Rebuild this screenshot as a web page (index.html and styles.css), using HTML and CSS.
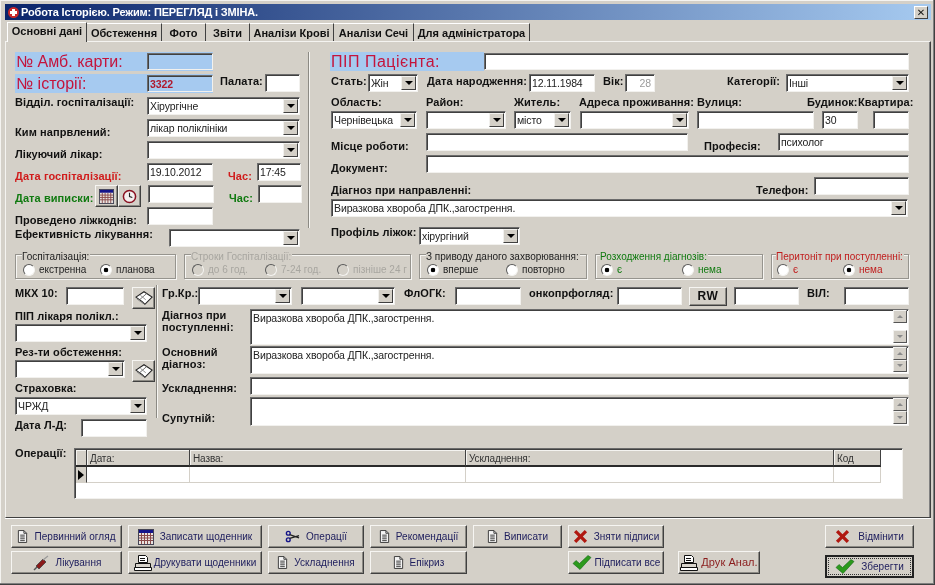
FILE: index.html
```html
<!DOCTYPE html>
<html lang="uk">
<head>
<meta charset="utf-8">
<title>Робота Історією</title>
<link rel="stylesheet" href="styles.css">
</head>
<body>
<svg class="defs" width="0" height="0" aria-hidden="true">
  <symbol id="i-doc" viewBox="0 0 12 14"><path d="M1.500.5h6l3 3v10h-9z" fill="#f4f4f4" stroke="#333"/><path d="M7.500.5v3h3M3.500 5.500h5M3.500 7.500h5M3.500 9.500h5M3.500 11.500h5" fill="none" stroke="#333"/></symbol>
  <symbol id="i-cal" viewBox="0 0 16 16"><rect x=".5" y=".5" width="15" height="15" fill="#e8e4e0" stroke="#445"/><rect x="1" y="1" width="14" height="3" fill="#14148a"/><path d="M1 6.500h14M1 9h14M1 11.500h14M3.500 4v11M6.500 4v11M9.500 4v11M12.500 4v11" stroke="#8a4a4a"/></symbol>
  <symbol id="i-clock" viewBox="0 0 16 16"><circle cx="8" cy="8" r="6.500" fill="#f4eeee" stroke="#8a1020" stroke-width="1.600"/><path d="M8 4v4l3 1" fill="none" stroke="#222" stroke-width="1.200"/></symbol>
  <symbol id="i-book" viewBox="0 0 20 16"><path d="M1 7 10 1l3 2 6 4-8 8-3-3z" fill="#fff" stroke="#222" stroke-width="1.200"/><path d="M13 3 5 10" fill="none" stroke="#666"/><path d="M2 9l7 5M6 5l6 5" fill="none" stroke="#888"/></symbol>
  <symbol id="i-sci" viewBox="0 0 16 14"><circle cx="3.500" cy="3.500" r="2" fill="none" stroke="#14148a" stroke-width="1.500"/><circle cx="3.500" cy="10.500" r="2" fill="none" stroke="#14148a" stroke-width="1.500"/><path d="M5 5l10 3.500M5 9l10-3" stroke="#222" stroke-width="1.300"/></symbol>
  <symbol id="i-syr" viewBox="0 0 18 16"><path d="M2 15l3-3" stroke="#555" stroke-width="1.500"/><path d="M4 11l7-7 3 3-7 7z" fill="#8a1a1a" stroke="#444" stroke-width=".8"/><path d="M11 5l5-4" stroke="#999" stroke-width="1.200"/></symbol>
  <symbol id="i-prn" viewBox="0 0 18 16"><path d="M4.500.5h7l2 2v5h-9z" fill="#fff" stroke="#111"/><path d="M6 3.500h5M6 5.500h5" stroke="#111"/><path d="M1.500 8.500h15v4h-15z" fill="#d8d4cc" stroke="#111"/><path d="M.5 12.500h17v3H.5z" fill="#fff" stroke="#111"/></symbol>
  <symbol id="i-x" viewBox="0 0 16 16"><path d="M1 3.500 3.500 1 8 5.500 12.500 1 15 3.500 10.500 8 15 12.500 12.500 15 8 10.500 3.500 15 1 12.500 5.500 8z" fill="#b01810"/></symbol>
  <symbol id="i-ok" viewBox="0 0 20 16"><path d="M1 9l3-3 3.500 3L16 1l3 2L8 15z" fill="#2c9a1c" stroke="#14641a" stroke-width=".6"/></symbol>
</svg>

<div class="win">
  <header class="title">
    <span class="app-ico"></span>
    <span class="title-text">Робота Історією. Режим: ПЕРЕГЛЯД і ЗМІНА.</span>
    <span class="close">✕</span>
  </header>

  <nav class="tabs">
    <span class="tab active">Основні дані</span>
    <span class="tab w75">Обстеження</span>
    <span class="tab w44">Фото</span>
    <span class="tab w44">Звіти</span>
    <span class="tab w84">Аналізи Крові</span>
    <span class="tab w80">Аналізи Сечі</span>
    <span class="tab w116">Для адміністратора</span>
  </nav>

  <main class="panel">
    <section class="top">
      <div class="col-l">
        <div class="row">
          <div class="blue w198"><span class="big w132">№ Амб. карти:</span><span class="fld w66 h17"></span></div>
        </div>
        <div class="row h23">
          <div class="blue w198"><span class="big w132">№ історії:</span><span class="fld w66 h17 val-red">3322</span></div>
          <span class="lbl ml7 w45 t1">Палата:</span><span class="fld w35"></span>
        </div>
        <div class="row"><span class="lbl w132 up">Відділ. госпіталізації:</span><div class="fld sel w153">Хірургічне<i class="arr"></i></div></div>
        <div class="row"><span class="lbl w132 dn">Ким напрвлений:</span><div class="fld sel w153">лікар поліклініки<i class="arr"></i></div></div>
        <div class="row"><span class="lbl w132 dn">Лікуючий лікар:</span><div class="fld sel w153"><i class="arr"></i></div></div>
        <div class="row">
          <span class="lbl w132 dn c-red">Дата госпіталізації:</span><span class="fld w66 c-dred">19.10.2012</span>
          <span class="lbl ml15 w29 dn c-red">Час:</span><span class="fld w44 c-dred">17:45</span>
        </div>
        <div class="row">
          <span class="lbl w80 dn c-green">Дата виписки:</span>
          <span class="btn ib"><svg class="ic15"><use href="#i-cal"/></svg></span>
          <span class="btn ib"><svg class="ic15"><use href="#i-clock"/></svg></span>
          <span class="fld ml7 w66"></span>
          <span class="lbl ml15 w29 dn c-green">Час:</span><span class="fld w44"></span>
        </div>
        <div class="row"><span class="lbl w132 dn">Проведено ліжкоднів:</span><span class="fld w66"></span></div>
        <div class="row"><span class="lbl w154 up">Ефективність лікування:</span><div class="fld sel w131"><i class="arr"></i></div></div>
      </div>
      <div class="vline v176"></div>
      <div class="col-r">
        <div class="row">
          <div class="blue w154 shift"><span class="big pat">ПІП Пацієнта:</span></div><span class="fld w425 h17 mt1"></span>
        </div>
        <div class="row">
          <span class="lbl w37 t1">Стать:</span><div class="fld sel w50">Жін<i class="arr"></i></div>
          <span class="lbl ml9 w102 t1">Дата народження:</span><span class="fld w66">12.11.1984</span>
          <span class="lbl ml8 w22 t1">Вік:</span><span class="fld w30 ro">28</span>
          <span class="lbl ml72 w59 t1">Категорії:</span><div class="fld sel w123">Інші<i class="arr"></i></div>
        </div>
        <div class="row h15">
          <span class="lbl w95">Область:</span><span class="lbl w88">Район:</span><span class="lbl w65">Житель:</span>
          <span class="lbl w118">Адреса проживання:</span><span class="lbl w110">Вулиця:</span><span class="lbl w51">Будинок:</span><span class="lbl">Квартира:</span>
        </div>
        <div class="row">
          <div class="fld sel w86">Чернівецька<i class="arr"></i></div>
          <div class="fld sel ml9 w80"><i class="arr"></i></div>
          <div class="fld sel ml8 w57">місто<i class="arr"></i></div>
          <div class="fld sel ml9 w109"><i class="arr"></i></div>
          <span class="fld ml8 w117"></span><span class="fld ml8 w36">30</span><span class="fld ml15 w36"></span>
        </div>
        <div class="row">
          <span class="lbl w95 dn">Місце роботи:</span><span class="fld w262"></span>
          <span class="lbl ml16 w74 dn">Професія:</span><span class="fld w131">психолог</span>
        </div>
        <div class="row"><span class="lbl w95 dn">Документ:</span><span class="fld w483"></span></div>
        <div class="row between">
          <span class="lbl dn">Діагноз при направленні:</span>
          <span class="pair"><span class="lbl w58 dn">Телефон:</span><span class="fld w95"></span></span>
        </div>
        <div class="row h28"><div class="fld sel w577">Виразкова хвороба ДПК.,загострення.<i class="arr"></i></div></div>
        <div class="row"><span class="lbl w88 up">Профіль ліжок:</span><div class="fld sel w101">хірургіний<i class="arr"></i></div></div>
      </div>
    </section>

    <section class="groups">
      <div class="group w161 p7">
        <span class="legend">Госпіталізація:</span>
        <div class="radios"><span class="radio w77"><i class="rb"></i>екстренна</span><span class="radio"><i class="rb on"></i>планова</span></div>
      </div>
      <div class="group w227 p7 dis">
        <span class="legend">Строки Госпіталізації:</span>
        <div class="radios"><span class="radio w73"><i class="rb"></i>до 6 год.</span><span class="radio w72"><i class="rb"></i>7-24 год.</span><span class="radio"><i class="rb"></i>пізніше 24 г</span></div>
      </div>
      <div class="group w168 p7">
        <span class="legend">З приводу даного захворювання:</span>
        <div class="radios"><span class="radio w79"><i class="rb on"></i>вперше</span><span class="radio"><i class="rb"></i>повторно</span></div>
      </div>
      <div class="group w168 p5 gc">
        <span class="legend">Розходження діагнозів:</span>
        <div class="radios"><span class="radio w81"><i class="rb on"></i>є</span><span class="radio"><i class="rb"></i>нема</span></div>
      </div>
      <div class="group w138 p5 rc">
        <span class="legend">Перитоніт при поступленні:</span>
        <div class="radios"><span class="radio w66"><i class="rb"></i>є</span><span class="radio"><i class="rb on"></i>нема</span></div>
      </div>
    </section>

    <section class="lower">
      <div class="low-l">
        <div class="row h23"><span class="lbl w51">МКХ 10:</span><span class="fld w58"></span><span class="btn ib2 ml8"><svg class="ic17"><use href="#i-book"/></svg></span></div>
        <div class="row h14"><span class="lbl">ПІП лікаря полікл.:</span></div>
        <div class="row"><div class="fld sel w132"><i class="arr"></i></div></div>
        <div class="row h14"><span class="lbl">Рез-ти обстеження:</span></div>
        <div class="row"><div class="fld sel w110"><i class="arr"></i></div><span class="btn ib2 ml7"><svg class="ic17"><use href="#i-book"/></svg></span></div>
        <div class="row h15"><span class="lbl">Страховка:</span></div>
        <div class="row"><div class="fld sel w132">ЧРЖД<i class="arr"></i></div></div>
        <div class="row h18"><span class="lbl w66">Дата Л-Д:</span><span class="fld w66"></span></div>
      </div>
      <div class="vline v133"></div>
      <div class="low-r">
        <div class="row">
          <span class="lbl w36">Гр.Кр.:</span><div class="fld sel w94"><i class="arr"></i></div><div class="fld sel ml9 w94"><i class="arr"></i></div>
          <span class="lbl ml9 w51">ФлОГК:</span><span class="fld w66"></span>
          <span class="lbl ml8 w88">онкопрфогляд:</span><span class="fld w65"></span>
          <span class="btn rw ml7">RW</span><span class="fld ml7 w65"></span>
          <span class="lbl ml8 w37">ВІЛ:</span><span class="fld w65"></span>
        </div>
        <div class="tarow h36">
          <span class="lbl w88 ml">Діагноз при<br>поступленні:</span>
          <div class="fld ta">Виразкова хвороба ДПК.,загострення.<div class="sb"><i class="sbb up-a"></i><i class="sbb dn-a"></i></div></div>
        </div>
        <div class="tarow h28 mt1">
          <span class="lbl w88 ml">Основний<br>діагноз:</span>
          <div class="fld ta">Виразкова хвороба ДПК.,загострення.<div class="sb"><i class="sbb up-a"></i><i class="sbb dn-a"></i></div></div>
        </div>
        <div class="tarow h18 mt3">
          <span class="lbl w88 t5">Ускладнення:</span>
          <div class="fld ta"></div>
        </div>
        <div class="tarow h29 mt2">
          <span class="lbl w88 t15">Супутній:</span>
          <div class="fld ta"><span></span><div class="sb"><i class="sbb up-a"></i><i class="sbb dn-a"></i></div></div>
        </div>
      </div>
    </section>

    <section class="ops">
      <span class="lbl w58 up">Операції:</span>
      <div class="fld grid">
        <div class="gh">
          <span class="hc"></span><span class="hc">Дата:</span><span class="hc">Назва:</span><span class="hc">Ускладнення:</span><span class="hc">Код</span>
          <span class="ind"></span><span class="dc"></span><span class="dc"></span><span class="dc"></span><span class="dc"></span>
        </div>
      </div>
    </section>
  </main>

  <footer class="foot">
    <div class="fgrid">
      <span class="btn fb"><svg class="ic13"><use href="#i-doc"/></svg>Первинний огляд</span>
      <span class="btn fb"><svg class="ic16"><use href="#i-cal"/></svg>Записати щоденник</span>
      <span class="btn fb"><svg class="ic15"><use href="#i-sci"/></svg>Операції</span>
      <span class="btn fb"><svg class="ic13"><use href="#i-doc"/></svg>Рекомендації</span>
      <span class="btn fb"><svg class="ic13"><use href="#i-doc"/></svg>Виписати</span>
      <span class="btn fb"><svg class="ic15"><use href="#i-x"/></svg>Зняти підписи</span>
      <span class="btn fb"><svg class="ic17"><use href="#i-syr"/></svg>Лікування</span>
      <span class="btn fb g2"><svg class="ic17"><use href="#i-prn"/></svg>Друкувати щоденники</span>
      <span class="btn fb"><svg class="ic13"><use href="#i-doc"/></svg>Ускладнення</span>
      <span class="btn fb"><svg class="ic13"><use href="#i-doc"/></svg>Епікриз</span>
      <span class="btn fb c6"><svg class="ic18"><use href="#i-ok"/></svg>Підписати все</span>
    </div>
    <div class="fmid"><span class="btn fb druk"><svg class="ic17"><use href="#i-prn"/></svg>Друк Анал.</span></div>
    <div class="fright">
      <span class="btn fb cancel"><svg class="ic15"><use href="#i-x"/></svg>Відмінити</span>
      <span class="btn fb save"><span class="dots"><svg class="ic18"><use href="#i-ok"/></svg>Зберегти</span></span>
    </div>
  </footer>
</div>
</body>
</html>
```

FILE: styles.css
```css
* { box-sizing: border-box; }
html, body { margin: 0; padding: 0; background: #d4d0c8; }
body { width: 935px; height: 585px; overflow: hidden; font: 11px/13px "Liberation Sans", Arial, sans-serif; color: #111; }
.defs { position: absolute; }
i { display: block; font-style: normal; }

.win { width: 935px; height: 585px; padding: 4px 4px 0 5px; display: flex; flex-direction: column; background: #d4d0c8; box-shadow: inset -1px -1px #404040, inset -2px -2px #808080, inset 1px 1px #f4f3f0; filter: blur(.3px); }

.title { height: 16px; flex: none; display: flex; align-items: center; padding: 0 3px 0 3px; color: #fff; font-weight: bold; background: linear-gradient(90deg, #0a246a, #a6caf0); }
.app-ico { width: 11px; height: 11px; border-radius: 50%; margin-right: 2px; background: linear-gradient(#fff, #fff) center/7px 3px no-repeat, linear-gradient(#fff, #fff) center/3px 7px no-repeat, #c8282a; }
.title-text { flex: 1; letter-spacing: -.15px; }
.close { width: 14px; height: 13px; font: bold 10px/11px "DejaVu Sans", sans-serif; text-align: center; color: #111; background: #d4d0c8; border: 1px solid; border-color: #fff #404040 #404040 #fff; }

.tabs { height: 21px; flex: none; display: flex; align-items: flex-end; padding-left: 2px; }
.tab { height: 18px; padding-top: 3px; text-align: center; font-weight: bold; border-top: 1px solid #fff; border-right: 1px solid #404040; white-space: nowrap; }
.tab.active { position: relative; z-index: 1; width: 80px; height: 20px; padding-top: 2px; margin-bottom: -1px; background: #d4d0c8; border-left: 1px solid #fff; }

.panel { height: 477px; flex: none; padding: 10px 0 0 9px; border: 1px solid; border-color: #f4f3f0 #404040 #404040 #f4f3f0; box-shadow: inset -1px 0 #808080, 0 1px #fff; }
.top { display: flex; height: 201px; }
.col-l { width: 285px; flex: none; }
.col-r { width: 578px; flex: none; }
.row { display: flex; height: 22px; flex: none; }
.between { justify-content: space-between; }
.pair { display: flex; }
.vline { flex: none; width: 2px; background: #8c8a84; border-right: 1px solid #f6f5f2; }
.v176 { height: 176px; margin: 0 21px 0 8px; }
.v133 { height: 133px; margin: -2px 4px 0 1px; }

.blue { display: flex; background: #a6caf0; height: 19px; flex: none; }
.shift { margin-left: -1px; width: 154px; }
.big { font-size: 16px; line-height: 19px; color: #c4143c; white-space: nowrap; padding-left: 1px; }
.pat { letter-spacing: .5px; }
.lbl { font-weight: bold; letter-spacing: .08px; white-space: nowrap; flex: none; display: block; }
.up { margin-top: -1px; }
.dn { margin-top: 7px; }
.t1 { margin-top: 1px; }
.t5 { margin-top: 5px; }
.t15 { margin-top: 15px; }
.c-red { color: #d01c1c; }
.c-green { color: #107a10; }
.c-dred { color: #8c1c24; }

.fld { display: block; flex: none; height: 18px; padding: 2px 0 0 2px; background: #fff; white-space: nowrap; overflow: hidden; color: #222; font-size: 10.5px; letter-spacing: -.12px; border: 1px solid; border-color: #6c6c6c #f2f1ee #f2f1ee #6c6c6c; box-shadow: inset 1px 1px #404040; }
.h17 { height: 17px; margin-top: 1px; }
.blue .fld { background: #a6caf0; }
.val-red { color: #b0182c; font-weight: bold; }
.ro { text-align: right; padding-right: 3px; color: #9a9a9a; }
.sel { display: flex; justify-content: space-between; height: 18px; padding-right: 1px; }
.arr { width: 15px; height: 14px; margin: -1px 0 0 auto; flex: none; background: #d4d0c8; border: 1px solid; border-color: #f2f1ee #404040 #404040 #f2f1ee; display: flex; align-items: center; justify-content: center; }
.arr::after { content: ""; border: 4px solid transparent; border-top-color: #000; border-bottom: 0; }

.btn { display: flex; align-items: center; justify-content: center; flex: none; background: #d4d0c8; border: 1px solid; border-color: #f6f5f2 #404040 #404040 #f6f5f2; box-shadow: inset -1px -1px #8c8a84; }
.ib { width: 23px; height: 22px; }
.ib2 { width: 23px; height: 22px; }
.ic13 { width: 11px; height: 13px; }
.ic15 { width: 15px; height: 15px; }
.ic16 { width: 16px; height: 16px; }
.ic17 { width: 18px; height: 16px; }
.ic18 { width: 20px; height: 17px; }
.rw { width: 38px; height: 19px; font: bold 12px/13px "Liberation Sans", sans-serif; letter-spacing: .6px; }

.groups { display: flex; gap: 8px; margin-top: 1px; height: 25px; }
.group { height: 25px; font-size: 10px; border: 1px solid #96948e; box-shadow: 1px 1px #f6f5f2, inset 1px 1px #f6f5f2; color: #222; }
.p7 { padding-left: 7px; }
.p5 { padding-left: 5px; }
.legend { display: block; width: fit-content; margin: -5px 0 0 -1px; padding: 0 1px 0 0; background: #d4d0c8; white-space: nowrap; }
.radios { display: flex; }
.radio { display: flex; align-items: center; height: 13px; flex: none; gap: 4px; white-space: nowrap; }
.rb { width: 12px; height: 12px; flex: none; border-radius: 50%; background: #fff; border: 1px solid; border-color: #5a5a5a #f4f3f0 #f4f3f0 #5a5a5a; }
.rb.on { background: radial-gradient(circle, #000 0 2px, #fff 2.6px); }
.dis { color: #a8a6a0; }
.dis .rb { background: #d4d0c8; }
.gc { color: #107a10; }
.rc { color: #c01c1c; }

.lower { display: flex; margin-top: 8px; height: 150px; }
.low-l { width: 140px; flex: none; }
.low-r { width: 747px; flex: none; }
.tarow { display: flex; flex: none; }
.ml { line-height: 12px; }
.ta { flex: 1; height: 100%; display: flex; justify-content: space-between; padding: 2px 1px 1px 2px; width: auto; }
.sb { width: 14px; flex: none; margin-top: -2px; display: flex; flex-direction: column; justify-content: space-between; }
.sbb { height: 13px; background: #d4d0c8; border: 1px solid; border-color: #f2f1ee #555 #555 #f2f1ee; display: flex; align-items: center; justify-content: center; }
.sbb::after { content: ""; border: 3px solid transparent; }
.up-a::after { border-bottom-color: #8a8a8a; border-top: 0; }
.dn-a::after { border-top-color: #8a8a8a; border-bottom: 0; }

.ops { display: flex; margin-top: 11px; }
.grid { width: 829px; height: 51px; padding: 0; margin-left: 1px; box-shadow: inset 1px 1px #404040; }
.gh { display: grid; grid-template-columns: 11px 103px 276px 368px 47px; grid-template-rows: 17px 16px; width: 805px; margin-left: 1px; margin-top: 1px; }
.hc { background: #d4d0c8; border-right: 1px solid #404040; border-bottom: 2px solid #2a2a2a; box-shadow: inset 1px 1px #f4f3f0; padding: 2px 0 0 3px; color: #333; font-size: 10px; }
.ind { background: #d4d0c8; border-right: 1px solid #404040; border-bottom: 1px solid #d4d0c8; display: flex; align-items: center; justify-content: center; }
.ind::after { content: ""; border: 5px solid transparent; border-left: 6px solid #000; border-right: 0; }
.dc { border-right: 1px solid #d4d0c8; border-bottom: 1px solid #d4d0c8; }

.foot { display: flex; padding: 7px 0 0 6px; }
.fgrid { display: grid; grid-template-columns: 111px 134px 96px 97px 89px 96px; grid-template-rows: 23px 23px; column-gap: 6px; row-gap: 3px; }
.fb { gap: 6px; color: #1c1c5c; font-size: 10px; letter-spacing: .05px; white-space: nowrap; height: 23px; }
.g2 { gap: 2px; }
.c6 { grid-column: 6; gap: 3px; }
.fmid { margin-left: 14px; padding-top: 26px; }
.druk { width: 82px; color: #8a1c1c; gap: 3px; font-size: 11px; }
.fright { margin-left: 65px; display: flex; flex-direction: column; gap: 7px; }
.cancel { width: 89px; gap: 8px; }
.save { width: 89px; height: 23px; border: 2px solid #222; box-shadow: none; padding: 1px; }
.dots { display: flex; align-items: center; justify-content: center; gap: 6px; width: 100%; height: 100%; border: 1px dotted #333; }

.w22 { width: 22px; } .w29 { width: 29px; } .w30 { width: 30px; } .w35 { width: 35px; } .w36 { width: 36px; } .w37 { width: 37px; }
.w44 { width: 44px; } .w45 { width: 45px; } .w50 { width: 50px; } .w51 { width: 51px; } .w57 { width: 57px; } .w58 { width: 58px; } .w59 { width: 59px; }
.w65 { width: 65px; } .w66 { width: 66px; } .w72 { width: 72px; } .w73 { width: 73px; } .w74 { width: 74px; } .w75 { width: 75px; } .w77 { width: 77px; } .w79 { width: 79px; }
.w80 { width: 80px; } .w81 { width: 81px; } .w84 { width: 84px; } .w86 { width: 86px; } .w88 { width: 88px; } .w94 { width: 94px; } .w95 { width: 95px; }
.w101 { width: 101px; } .w102 { width: 102px; } .w109 { width: 109px; } .w110 { width: 110px; } .w116 { width: 116px; } .w117 { width: 117px; } .w118 { width: 118px; }
.w123 { width: 123px; } .w131 { width: 131px; } .w132 { width: 132px; } .w138 { width: 138px; } .w153 { width: 153px; } .w154 { width: 154px; } .w161 { width: 161px; } .w168 { width: 168px; }
.w198 { width: 198px; } .w227 { width: 227px; } .w262 { width: 262px; } .w425 { width: 425px; } .w483 { width: 483px; } .w577 { width: 577px; }
.ml7 { margin-left: 7px; } .ml8 { margin-left: 8px; } .ml9 { margin-left: 9px; } .ml15 { margin-left: 15px; } .ml16 { margin-left: 16px; } .ml72 { margin-left: 72px; }
.mt1 { margin-top: 1px; } .mt2 { margin-top: 2px; } .mt3 { margin-top: 3px; }
.row.h14 { height: 14px; } .row.h15 { height: 15px; } .row.h18, .tarow.h18 { height: 18px; } .row.h23 { height: 23px; } .row.h28, .tarow.h28 { height: 28px; } .tarow.h29 { height: 29px; } .tarow.h36 { height: 36px; }
```
